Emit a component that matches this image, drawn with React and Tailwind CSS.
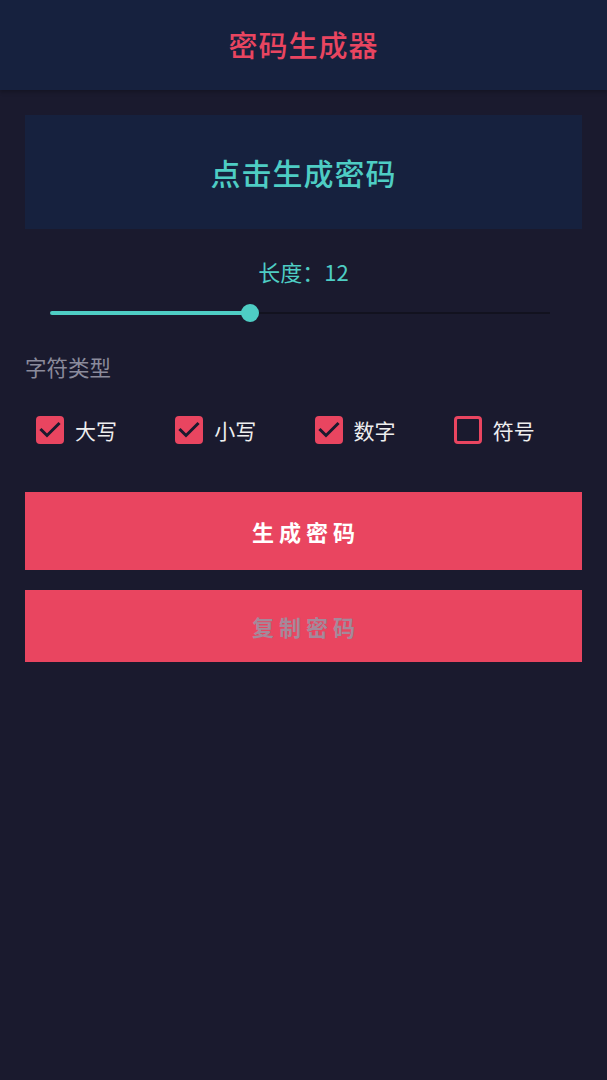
import { useState } from "react";

const OPTIONS = [
  { key: "upper", label: "大写" },
  { key: "lower", label: "小写" },
  { key: "digits", label: "数字" },
  { key: "symbols", label: "符号" },
];

const MIN_LEN = 4;
const MAX_LEN = 24;

function Checkbox({ checked, label, onToggle }) {
  return (
    <button
      type="button"
      onClick={onToggle}
      className="flex items-center gap-[11px] pl-[11px]"
    >
      {checked ? (
        <span className="flex h-[28px] w-[28px] items-center justify-center rounded-[4px] bg-[#e94560]">
          <svg width="28" height="28" viewBox="0 0 28 28" fill="none">
            <polyline
              points="5.5,14 11,19.5 22.5,8"
              stroke="#1a1a2e"
              strokeWidth="3"
              strokeLinecap="square"
            />
          </svg>
        </span>
      ) : (
        <span className="h-[28px] w-[28px] rounded-[4px] border-[3px] border-[#e94560]" />
      )}
      <span className="text-[21px] leading-[28px] text-[#eeeeee]">{label}</span>
    </button>
  );
}

export default function App() {
  const [length] = useState(12);
  const [opts, setOpts] = useState({
    upper: true,
    lower: true,
    digits: true,
    symbols: false,
  });
  const pct = ((length - MIN_LEN) / (MAX_LEN - MIN_LEN)) * 100;

  return (
    <div
      className="min-h-screen bg-[#1a1a2e]"
      style={{ fontFamily: '"Noto Sans CJK SC", "Noto Sans", Roboto, sans-serif' }}
    >
      <header className="flex h-[90px] items-center justify-center bg-[#16213e] shadow-[0_2px_4px_rgba(0,0,0,0.25)]">
        <h1 className="text-[29px] font-medium tracking-[1px] text-[#e94560]">
          密码生成器
        </h1>
      </header>

      <main className="px-[25px] pt-[25px]">
        <div className="flex h-[114px] items-center justify-center bg-[#16213e]">
          <span className="text-[30px] font-medium tracking-[1px] text-[#4ecdc4]">
            点击生成密码
          </span>
        </div>

        <p className="mt-[27px] text-center text-[22px] leading-[30px] text-[#4ecdc4]">
          长度：{length}
        </p>

        <div className="relative ml-[25px] mt-[17px] flex h-[20px] w-[500px] items-center">
          <div className="h-[2px] w-full bg-[#12121f]" />
          <div
            className="absolute left-0 top-[8px] h-[4px] rounded-full bg-[#4ecdc4]"
            style={{ width: `${pct}%` }}
          />
          <div
            className="absolute top-[1px] h-[18px] w-[18px] -translate-x-1/2 rounded-full bg-[#4ecdc4]"
            style={{ left: `${pct}%` }}
          />
        </div>

        <p className="mt-[30px] text-[21.5px] leading-[28px] text-[#8b8b9c]">字符类型</p>

        <div className="mt-[35px] grid grid-cols-4">
          {OPTIONS.map((o) => (
            <Checkbox
              key={o.key}
              label={o.label}
              checked={opts[o.key]}
              onToggle={() => setOpts({ ...opts, [o.key]: !opts[o.key] })}
            />
          ))}
        </div>

        <button
          type="button"
          className="mt-[48px] flex h-[78px] w-full items-center justify-center bg-[#e94560] pl-[5px] text-[22px] font-bold tracking-[5px] text-white"
        >
          生成密码
        </button>
        <button
          type="button"
          disabled
          className="mt-[20px] flex h-[72px] w-full items-center justify-center bg-[#e94560] pl-[5px] text-[22px] font-bold tracking-[5px] text-[#a4899a]"
        >
          复制密码
        </button>
      </main>
    </div>
  );
}
